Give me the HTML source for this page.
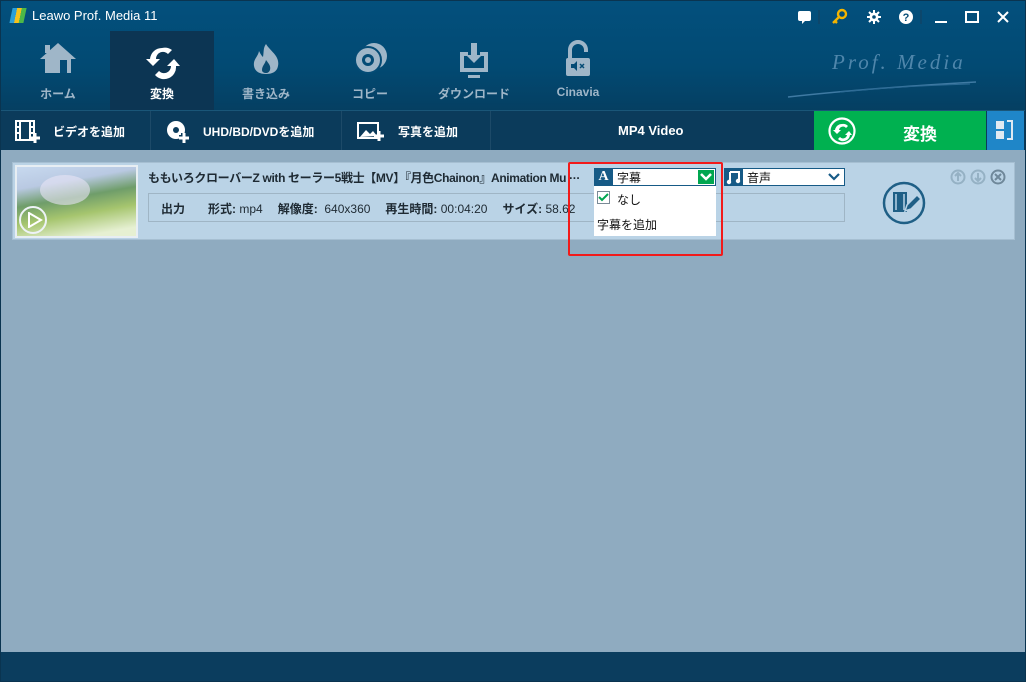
<!DOCTYPE html>
<html><head><meta charset="utf-8"><style>
*{margin:0;padding:0;box-sizing:border-box}
body{width:1026px;height:682px;overflow:hidden;position:relative;background:#8fabc0;font-family:"Liberation Sans","Noto Sans CJK JP",sans-serif;}
.abs{position:absolute}
#top{left:0;top:0;width:1026px;height:110px;background:linear-gradient(#03507d,#024a73 60%,#053f62);}
#tb{left:0;top:110px;width:1026px;height:40px;background:#0b3b5b;border-top:1px solid #1a5678}
.nav{top:30px;width:104px;height:80px;color:#9fb6c8;font-size:12px;text-align:center}
.nav .lb{position:absolute;top:55px;width:100%;font-weight:bold}
.tbi{top:111px;height:39px;color:#fff;font-size:12px;font-weight:bold;border-right:1px solid #1d4a68;}
.tbi span{position:absolute;top:12px}
#item{left:12px;top:162px;width:1003px;height:78px;background:#bad3e6;border:1px solid #a6bfd2}
#status{left:0;top:652px;width:1026px;height:30px;background:#0b3d5e}
</style></head><body>
<div id="top" class="abs"></div>
<div class="abs" style="left:11px;top:8px;width:14px;height:15px;background:linear-gradient(90deg,#2a9fd8 0 33%,#f6c21c 33% 66%,#4cb848 66%);transform:skewX(-12deg)"></div>
<div class="abs" style="left:32px;top:8px;color:#fff;font-size:13px">Leawo Prof. Media 11</div>
<svg class="abs" style="left:795px;top:8px" width="225" height="18">
<rect x="3" y="3" width="13" height="10" rx="2" fill="#fff"/><path d="M7 12l0 4 4-4z" fill="#fff"/>
<line x1="24" y1="2" x2="24" y2="16" stroke="#153f5c"/>
<circle cx="47" cy="6" r="4" fill="none" stroke="#f4b400" stroke-width="2.4"/><path d="M44 9l-6 6M40 13l2 2" stroke="#f4b400" stroke-width="2.4"/>
<circle cx="79" cy="9" r="4.5" fill="#fff"/><path d="M79 2v14M72 9h14M74 4l10 10M84 4l-10 10" stroke="#fff" stroke-width="2"/><circle cx="79" cy="9" r="1.8" fill="#044b75"/>
<circle cx="111" cy="9" r="7" fill="#fff"/><text x="111" y="13" font-size="11" font-weight="bold" text-anchor="middle" fill="#044b75" font-family="Liberation Sans">?</text>
<line x1="126" y1="2" x2="126" y2="16" stroke="#153f5c"/>
<rect x="140" y="13" width="12" height="2" fill="#fff"/>
<rect x="171" y="4" width="12" height="10" fill="none" stroke="#fff" stroke-width="2"/>
<path d="M203 4l10 10M213 4l-10 10" stroke="#fff" stroke-width="2"/>
</svg>
<div class="abs" style="left:832px;top:50px;color:#4f86ab;font-family:'Liberation Serif',serif;font-style:italic;font-size:21px;letter-spacing:3px">Prof. Media</div>
<svg class="abs" style="left:780px;top:78px" width="200" height="22"><path d="M8 19Q90 10 196 4" stroke="#3f7aa3" stroke-width="1.5" fill="none"/><path d="M60 14Q120 8 190 6" stroke="#2c6a94" stroke-width="1" fill="none"/></svg>
<div class="abs" style="left:110px;top:31px;width:104px;height:79px;background:#0c3553"></div>
<div class="abs nav" style="left:6px"><svg width="104" height="50"><path d="M52 13l-18 16h5v14h26V29h5z" fill="#9fb6c8"/><rect x="39" y="15" width="5" height="8" fill="#9fb6c8"/><rect x="54" y="30" width="7" height="13" fill="#044b75"/></svg><div class="lb">ホーム</div></div>
<div class="abs nav" style="left:110px;color:#fff"><svg width="104" height="50"><path d="M52 18a12 12 0 0 0-12 11h-4l7 7 7-7h-4a7 7 0 0 1 12-5l4-4a12 12 0 0 0-10-2zM64 29l-7 7h4a7 7 0 0 1-12 5l-4 4a12 12 0 0 0 21-9h4z" fill="#fff"/></svg><div class="lb">変換</div></div>
<div class="abs nav" style="left:214px"><svg width="104" height="50"><path d="M52 14c5 8 14 12 12 22-1 6-6 8-12 8s-11-2-12-8c-1-7 4-9 5-15 2 4 3 5 4 6 1-5 0-9 3-13z" fill="#9fb6c8"/><path d="M52 30c3 4 5 6 4 10-1 2-2 3-4 3s-4-1-4-3c0-4 3-6 4-10z" fill="#0a4a70"/></svg><div class="lb">書き込み</div></div>
<div class="abs nav" style="left:318px"><svg width="104" height="50"><circle cx="56" cy="26" r="13" fill="#9fb6c8"/><circle cx="50" cy="30" r="13" fill="#9fb6c8" stroke="#044b75" stroke-width="2"/><circle cx="50" cy="30" r="6" fill="#044b75"/><circle cx="50" cy="30" r="3" fill="#9fb6c8"/></svg><div class="lb">コピー</div></div>
<div class="abs nav" style="left:422px"><svg width="104" height="50"><path d="M38 22h8v4h-4v12h20V26h-4v-4h8v20H38z" fill="#9fb6c8"/><path d="M49 13h6v12h5l-8 8-8-8h5z" fill="#9fb6c8"/><rect x="46" y="45" width="12" height="3" fill="#9fb6c8"/></svg><div class="lb">ダウンロード</div></div>
<div class="abs nav" style="left:526px"><svg width="104" height="50"><path d="M44 28v-8a8 8 0 0 1 16 0v2" stroke="#9fb6c8" stroke-width="4" fill="none"/><rect x="40" y="28" width="24" height="18" rx="2" fill="#9fb6c8"/><path d="M45 34h3l3-3v10l-3-3h-3z" fill="#044b75"/><path d="M54 34l4 4M58 34l-4 4" stroke="#044b75" stroke-width="1.5"/></svg><div class="lb">Cinavia</div></div>
<div id="tb" class="abs"></div>
<div class="abs tbi" style="left:0;width:151px"><svg class="abs" style="left:14px;top:8px" width="26" height="24"><rect x="2" y="2" width="18" height="19" fill="none" stroke="#fff" stroke-width="2"/><path d="M6 2v19M16 2v19M2 8h4M2 14h4M16 8h4M16 14h4" stroke="#fff" stroke-width="2"/><path d="M21 14v10M16 19h10" stroke="#fff" stroke-width="3"/></svg><span style="left:53px">ビデオを追加</span></div>
<div class="abs tbi" style="left:151px;width:191px"><svg class="abs" style="left:14px;top:8px" width="26" height="24"><circle cx="11" cy="11" r="9" fill="#fff"/><circle cx="11" cy="11" r="3" fill="#0b3b5b"/><path d="M19 14v10M14 19h10" stroke="#0b3b5b" stroke-width="6"/><path d="M19 14v10M14 19h10" stroke="#fff" stroke-width="3"/></svg><span style="left:52px">UHD/BD/DVDを追加</span></div>
<div class="abs tbi" style="left:342px;width:149px"><svg class="abs" style="left:14px;top:8px" width="30" height="24"><rect x="2" y="4" width="20" height="15" fill="none" stroke="#fff" stroke-width="2"/><path d="M4 18l6-7 4 4 3-3 4 5z" fill="#fff"/><path d="M23 12v10M18 17h10" stroke="#fff" stroke-width="3"/></svg><span style="left:56px">写真を追加</span></div>
<div class="abs" style="left:618px;top:123px;color:#fff;font-size:13px;font-weight:bold">MP4 Video</div>
<div class="abs" style="left:814px;top:111px;width:172px;height:39px;background:#00b150"></div>
<svg class="abs" style="left:827px;top:116px" width="30" height="30"><circle cx="15" cy="15" r="12.5" fill="none" stroke="#fff" stroke-width="2.2"/><path d="M15 8a7 7 0 0 0-7 6h-2l4 4 4-4h-2a4 4 0 0 1 7-2l2-2a7 7 0 0 0-6-2zM22 15l-4 4h2a4 4 0 0 1-7 2l-2 2a7 7 0 0 0 12-4h2z" fill="#fff"/></svg>
<div class="abs" style="left:903px;top:120px;color:#fff;font-size:17px;font-weight:bold">変換</div>
<div class="abs" style="left:987px;top:111px;width:37px;height:39px;background:#1f86c8"></div>
<svg class="abs" style="left:994px;top:120px" width="24" height="22"><rect x="2" y="1" width="8" height="8" fill="#dfe9f1"/><rect x="2" y="11" width="8" height="8" fill="#dfe9f1"/><path d="M13 1h5v18h-5" stroke="#dfe9f1" stroke-width="2" fill="none"/></svg>
<div id="item" class="abs"></div>
<div class="abs" style="left:15px;top:165px;width:123px;height:73px;background:#e7eef3;"></div>
<div class="abs" style="left:17px;top:167px;width:119px;height:69px;background:linear-gradient(170deg,#c7d9ef 0%,#b9c9e2 25%,#6f9d6a 45%,#a6c56e 65%,#e6f0d2 90%)"></div>
<div class="abs" style="left:40px;top:175px;width:50px;height:30px;border-radius:50%;background:#e8e4f5;opacity:.6"></div>
<div class="abs" style="left:19px;top:206px;width:28px;height:28px;border:2px solid #eef3f7;border-radius:50%"></div>
<svg class="abs" style="left:27px;top:212px" width="16" height="16"><path d="M2 1l12 7-12 7z" fill="none" stroke="#fff" stroke-width="2"/></svg>
<div class="abs" style="left:148px;top:169px;font-size:12px;font-weight:bold;color:#1e2a33;white-space:nowrap;letter-spacing:-0.35px">ももいろクローバーZ with セーラー5戦士【MV】『月色Chainon』Animation Mu ···</div>
<div class="abs" style="left:148px;top:193px;width:697px;height:29px;border:1px solid #9fb5c5"></div>
<div class="abs" style="left:161px;top:200px;font-size:12px;color:#1e2a33;white-space:nowrap"><b>出力</b><span style="margin-left:23px"><b>形式:</b> mp4</span><span style="margin-left:15px"><b>解像度:</b>&nbsp; 640x360</span><span style="margin-left:15px"><b>再生時間:</b> 00:04:20</span><span style="margin-left:15px"><b>サイズ:</b> 58.62</span></div>
<div class="abs" style="left:594px;top:168px;width:122px;height:18px;background:#fff;border:1px solid #165a86"></div>
<div class="abs" style="left:594px;top:168px;width:19px;height:18px;background:#165a86;color:#fff;font-family:'Liberation Serif',serif;font-weight:bold;font-size:14px;text-align:center;line-height:18px">A</div>
<div class="abs" style="left:617px;top:169px;font-size:12px;color:#111">字幕</div>
<div class="abs" style="left:698px;top:170px;width:16px;height:14px;background:#00a650"></div>
<svg class="abs" style="left:698px;top:170px" width="16" height="14"><path d="M3 4l5 5 5-5" stroke="#fff" stroke-width="2.5" fill="none"/></svg>
<div class="abs" style="left:594px;top:186px;width:122px;height:50px;background:#fff"></div>
<div class="abs" style="left:597px;top:191px;width:13px;height:13px;border:1px solid #7a8a96;background:#fff"></div>
<svg class="abs" style="left:597px;top:191px" width="13" height="13"><path d="M2 6l3 3 6-6" stroke="#00a650" stroke-width="2" fill="none"/></svg>
<div class="abs" style="left:617px;top:191px;font-size:12px;color:#111">なし</div>
<div class="abs" style="left:597px;top:216px;font-size:12px;color:#111">字幕を追加</div>
<div class="abs" style="left:724px;top:168px;width:121px;height:18px;background:#fff;border:1px solid #165a86"></div>
<div class="abs" style="left:724px;top:168px;width:19px;height:18px;background:#165a86"></div>
<svg class="abs" style="left:724px;top:168px" width="19" height="18"><path d="M6 4h9v9M6 4v10" stroke="#fff" stroke-width="2" fill="none"/><circle cx="5" cy="14" r="2.2" fill="#fff"/><circle cx="14" cy="13" r="2.2" fill="#fff"/></svg>
<div class="abs" style="left:747px;top:169px;font-size:12px;color:#111">音声</div>
<svg class="abs" style="left:827px;top:171px" width="14" height="12"><path d="M2 3l5 5 5-5" stroke="#165a86" stroke-width="2.2" fill="none"/></svg>
<div class="abs" style="left:568px;top:162px;width:155px;height:94px;border:2.5px solid #f21a1a;border-radius:2px"></div>
<svg class="abs" style="left:881px;top:180px" width="46" height="46"><circle cx="23" cy="23" r="20" fill="none" stroke="#1f5f86" stroke-width="2.5"/><rect x="12" y="12" width="14" height="20" fill="#1f5f86"/><path d="M15 14v16M23 14v16" stroke="#bad3e6" stroke-width="1.5"/><path d="M24 31l2-6 10-10 4 4-10 10z" fill="#1f5f86" stroke="#bad3e6" stroke-width="1.5"/></svg>
<svg class="abs" style="left:949px;top:168px" width="60" height="18"><circle cx="9" cy="9" r="6.5" fill="none" stroke="#95b1c4" stroke-width="2"/><path d="M9 13V5M6 8l3-3 3 3" stroke="#95b1c4" stroke-width="2" fill="none"/><circle cx="29" cy="9" r="6.5" fill="none" stroke="#95b1c4" stroke-width="2"/><path d="M29 5v8M26 10l3 3 3-3" stroke="#95b1c4" stroke-width="2" fill="none"/><circle cx="49" cy="9" r="6.5" fill="none" stroke="#6f889a" stroke-width="2"/><path d="M46 6l6 6M52 6l-6 6" stroke="#6f889a" stroke-width="2"/></svg>
<div id="status" class="abs"></div>
<div class="abs" style="left:0;top:0;width:1026px;height:682px;border:1px solid #0a3450;pointer-events:none"></div>
</body></html>
